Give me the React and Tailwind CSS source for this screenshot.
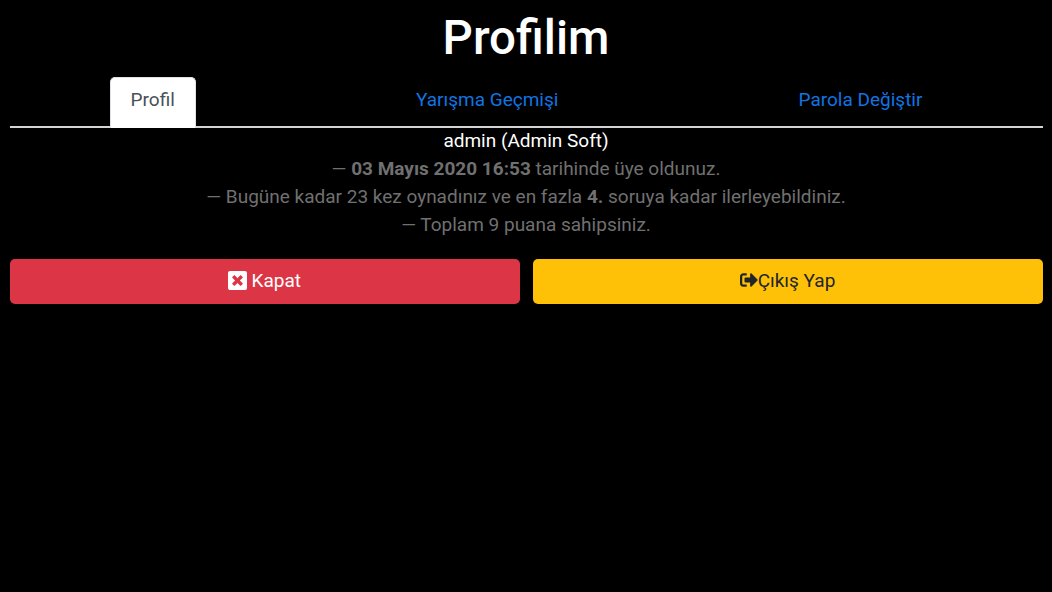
import React from "react";

function TimesSquare() {
  return (
    <svg width="19" height="19" viewBox="0 32 448 448" className="inline-block align-[-2.500px]" fill="currentColor">
      <path d="M400 32H48C21.500 32 0 53.500 0 80v352c0 26.500 21.500 48 48 48h352c26.500 0 48-21.500 48-48V80c0-26.500-21.500-48-48-48zm-54.400 289.100c4.700 4.700 4.700 12.300 0 17L306 377.600c-4.700 4.700-12.300 4.700-17 0L224 312l-65.100 65.600c-4.700 4.700-12.300 4.700-17 0L102.400 338c-4.700-4.700-4.700-12.300 0-17l65.600-65-65.600-65.100c-4.700-4.700-4.700-12.300 0-17l39.600-39.600c4.700-4.700 12.300-4.700 17 0l65 65.700 65.100-65.600c4.700-4.700 12.300-4.700 17 0l39.600 39.600c4.700 4.700 4.700 12.300 0 17L280 256l65.600 65.100z" />
    </svg>
  );
}

function SignOut() {
  return (
    <svg width="18" height="20" viewBox="0 0 512 512" className="inline-block align-[-3px]" fill="currentColor">
      <path d="M497 273L329 441c-15 15-41 4.500-41-17v-96H152c-13.300 0-24-10.700-24-24v-96c0-13.300 10.700-24 24-24h136V88c0-21.400 25.900-32 41-17l168 168c9.300 9.400 9.300 24.600 0 34zM192 436v-40c0-6.600-5.400-12-12-12H96c-17.700 0-32-14.300-32-32V160c0-17.700 14.300-32 32-32h84c6.600 0 12-5.400 12-12V76c0-6.600-5.400-12-12-12H96c-53 0-96 43-96 96v192c0 53 43 96 96 96h84c6.600 0 12-5.400 12-12z" />
    </svg>
  );
}

export default function App() {
  return (
    <div className="min-h-[592px] bg-black px-[9.500px] font-['Roboto',sans-serif] text-[19px] leading-[28px]">
      <h1 className="pt-[10px] text-center text-[47.500px] font-medium leading-[57px] text-white">Profilim</h1>
      <nav className="mt-[10px] flex justify-around border-b-2 border-[#d4d4d4]">
        <span className="-mb-[2px] h-[51px] rounded-t-[5px] border border-b-0 border-[#dee2e6] bg-white px-[20px] pt-[8px] text-[#495057]">Profil</span>
        <a className="px-[20px] pt-[9px] pb-[12px] text-[#1274e0]">Yarışma Geçmişi</a>
        <a className="px-[20px] pt-[9px] pb-[12px] text-[#1274e0]">Parola Değiştir</a>
      </nav>
      <div className="-mt-[1px] text-center text-[#707070]">
        <p className="text-white">admin (Admin Soft)</p>
        <p>— <b>03 Mayıs 2020 16:53</b> tarihinde üye oldunuz.</p>
        <p>— Bugüne kadar 23 kez oynadınız ve en fazla <b>4.</b> soruya kadar ilerleyebildiniz.</p>
        <p>— Toplam 9 puana sahipsiniz.</p>
      </div>
      <div className="mt-[20px] grid grid-cols-2 gap-[13px]">
        <button className="h-[44.500px] rounded-[5px] bg-[#dc3545] text-white"><TimesSquare /> Kapat</button>
        <button className="h-[44.500px] rounded-[5px] bg-[#ffc107] text-[#212529]"><SignOut />Çıkış Yap</button>
      </div>
    </div>
  );
}
